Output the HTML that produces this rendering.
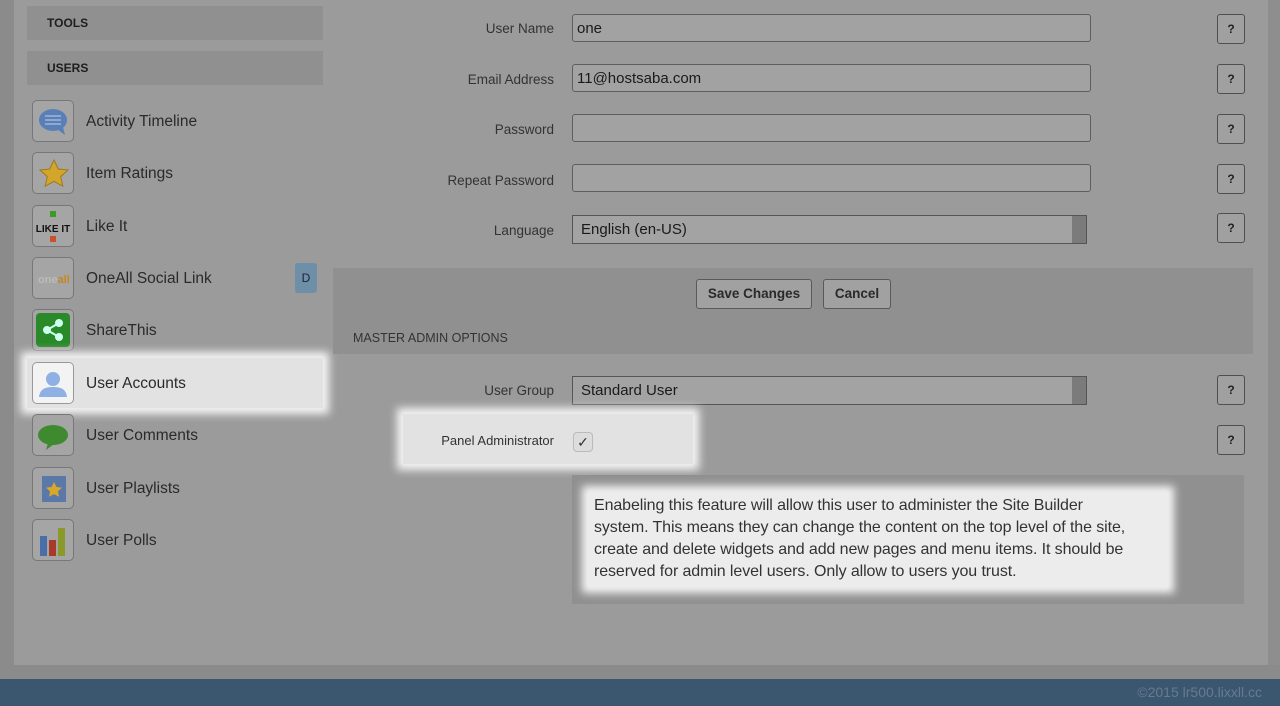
<!DOCTYPE html>
<html><head><meta charset="utf-8"><style>
*{box-sizing:border-box;margin:0;padding:0}
body{width:1280px;height:706px;overflow:hidden;background:#8b8b8b;font-family:"Liberation Sans",sans-serif;position:relative;color:#222}
.abs{position:absolute}
.panel{left:14px;top:0;width:1254px;height:665px;background:#9b9b9b}
.footer{left:0;top:679px;width:1280px;height:27px;background:#3b566f;color:#667b90;font-size:14px;text-align:right;padding:5px 18px 0 0}
.hdr{left:27px;width:296px;height:34px;background:#909090;font-size:12px;font-weight:bold;color:#1e1e1e;padding-left:20px;line-height:34px}
.item{left:27px;width:296px;height:50px;font-size:15.5px;color:#2a2a2a}
.item .ic{position:absolute;left:5px;top:4px;width:42px;height:42px;border:1.5px solid #777;border-radius:5px;background:#a5a5a5;overflow:hidden}
.item .t{position:absolute;left:59px;top:17px}
.hl{background:#e2e2e2;box-shadow:0 0 8px 6px #f4f4f4}
.lbl{right:726px;font-size:13.5px;color:#333;text-align:right}
.inp{left:572px;width:519px;height:28px;border:1px solid #5e5e5e;border-radius:3px;background:#a2a2a2;font-size:15px;padding:5px 4px;color:#1a1a1a}
.sel{width:515px;height:29px;border:1px solid #555;background:#a3a3a3;font-size:15px;padding:5px 8px;color:#1a1a1a;box-shadow:inset -14px 0 0 #7b7b7b}
.q{left:1217px;width:28px;height:30px;border:1px solid #4f4f4f;border-radius:3px;background:#a0a0a0;font-size:12px;font-weight:bold;text-align:center;line-height:28px;color:#222}
.btn{top:279px;height:30px;border:1px solid #5a5a5a;border-radius:3px;background:#a1a1a1;font-size:13.5px;font-weight:bold;line-height:28px;text-align:center;color:#2a2a2a}
</style></head><body>
<div class="abs panel"></div>
<div class="abs" style="left:1268px;top:0;width:12px;height:665px;background:#8e8e8e"></div>
<div class="abs footer">©2015 lr500.lixxll.cc</div>

<div class="abs hdr" style="top:6px">TOOLS</div>
<div class="abs hdr" style="top:51px">USERS</div>

<div class="abs item" style="top:96px"><div class="ic"><svg width="42" height="42"><ellipse cx="20" cy="19" rx="14" ry="11" fill="#5a7fb6"/><path d="M24 28l8 6-2-8z" fill="#5a7fb6"/><g stroke="#9fb6d8" stroke-width="1.5"><line x1="12" y1="15" x2="28" y2="15"/><line x1="12" y1="19" x2="28" y2="19"/><line x1="12" y1="23" x2="28" y2="23"/></g></svg></div><div class="t">Activity Timeline</div></div>
<div class="abs item" style="top:148px"><div class="ic"><svg width="42" height="42"><path d="M21 7l4.3 9 9.7 1-7.3 6.6 2.1 9.6L21 28.3l-8.8 4.9 2.1-9.6L7 17l9.7-1z" fill="#d3a62b" stroke="#9a7a1e"/></svg></div><div class="t">Item Ratings</div></div>
<div class="abs item" style="top:201px"><div class="ic"><svg width="42" height="42"><rect x="17" y="5" width="6" height="6" fill="#3a9a2a"/><text x="20" y="26" font-size="10" font-weight="bold" text-anchor="middle" font-family="Liberation Sans" fill="#111">LIKE IT</text><rect x="17" y="30" width="6" height="6" fill="#c8502a"/></svg></div><div class="t">Like It</div></div>
<div class="abs item" style="top:253px"><div class="ic"><svg width="42" height="42"><text x="5" y="25" font-size="11" font-weight="bold" font-family="Liberation Sans" fill="#bbb">one<tspan fill="#c8861f">all</tspan></text></svg></div><div class="t">OneAll Social Link</div><div class="abs" style="left:268px;top:10px;width:22px;height:30px;background:#6d8fa8;border-radius:3px;font-size:12px;text-align:center;line-height:30px;color:#223">D</div></div>
<div class="abs item" style="top:305px"><div class="ic"><svg width="42" height="42"><rect x="3" y="3" width="34" height="34" rx="4" fill="#2a8a2a"/><g fill="#cfe" stroke="#cfe" stroke-width="2"><circle cx="26" cy="13" r="3"/><circle cx="14" cy="20" r="3"/><circle cx="26" cy="27" r="3"/><path d="M26 13L14 20 26 27" fill="none"/></g></svg></div><div class="t">ShareThis</div></div>
<div class="abs item hl" style="top:358px"><div class="ic" style="background:#f3f3f3;border-color:#999"><svg width="42" height="42"><circle cx="20" cy="16" r="7" fill="#8fb0e4"/><path d="M6 34c1-8 6-10 14-10s13 2 14 10z" fill="#8fb0e4"/></svg></div><div class="t">User Accounts</div></div>
<div class="abs item" style="top:410px"><div class="ic"><svg width="42" height="42"><ellipse cx="20" cy="20" rx="15" ry="10" fill="#3f8a2f"/><path d="M15 28l-2 7 8-6z" fill="#3f8a2f"/></svg></div><div class="t">User Comments</div></div>
<div class="abs item" style="top:463px"><div class="ic"><svg width="42" height="42"><rect x="9" y="8" width="24" height="26" fill="#5a78a8"/><path d="M21 14l2.5 5 5.5.6-4 3.8 1 5.4-5-2.7-5 2.7 1-5.4-4-3.8 5.5-.6z" fill="#d9a82a"/></svg></div><div class="t">User Playlists</div></div>
<div class="abs item" style="top:515px"><div class="ic"><svg width="42" height="42"><rect x="7" y="16" width="7" height="20" fill="#4a6ea8"/><rect x="16" y="20" width="7" height="16" fill="#a83a2a"/><rect x="25" y="8" width="7" height="28" fill="#8a9a2a"/></svg></div><div class="t">User Polls</div></div>

<div class="abs lbl" style="top:21px">User Name</div>
<div class="abs inp" style="top:14px">one</div>
<div class="abs q" style="top:14px">?</div>
<div class="abs lbl" style="top:72px">Email Address</div>
<div class="abs inp" style="top:64px">11@hostsaba.com</div>
<div class="abs q" style="top:64px">?</div>
<div class="abs lbl" style="top:122px">Password</div>
<div class="abs inp" style="top:114px"></div>
<div class="abs q" style="top:114px">?</div>
<div class="abs lbl" style="top:173px">Repeat Password</div>
<div class="abs inp" style="top:164px"></div>
<div class="abs q" style="top:164px">?</div>
<div class="abs lbl" style="top:223px">Language</div>
<div class="abs sel" style="left:572px;top:215px">English (en-US)</div>
<div class="abs q" style="top:213px">?</div>

<div class="abs" style="left:333px;top:268px;width:920px;height:86px;background:#909090"></div>
<div class="abs btn" style="left:696px;width:116px">Save Changes</div>
<div class="abs btn" style="left:823px;width:68px">Cancel</div>
<div class="abs" style="left:353px;top:331px;font-size:12.5px;color:#333">MASTER ADMIN OPTIONS</div>

<div class="abs lbl" style="top:383px">User Group</div>
<div class="abs sel" style="left:572px;top:376px">Standard User</div>
<div class="abs q" style="top:375px">?</div>

<div class="abs hl" style="left:403px;top:414px;width:290px;height:50px"></div>
<div class="abs lbl" style="top:433px;font-size:13px">Panel Administrator</div>
<div class="abs" style="left:573px;top:432px;width:20px;height:20px;border-radius:4px;background:#ddd;border:1px solid #bbb;font-size:14px;text-align:center;line-height:18px;color:#333">✓</div>
<div class="abs q" style="top:425px">?</div>

<div class="abs" style="left:572px;top:475px;width:672px;height:129px;background:#909090"></div>
<div class="abs hl" style="left:588px;top:492px;width:580px;height:95px;padding:3px 6px;font-size:16px;letter-spacing:-0.1px;line-height:22px;color:#333;background:#ececec;white-space:nowrap;overflow:hidden">Enabeling this feature will allow this user to administer the Site Builder<br>system. This means they can change the content on the top level of the site,<br>create and delete widgets and add new pages and menu items. It should be<br>reserved for admin level users. Only allow to users you trust.</div>
</body></html>
